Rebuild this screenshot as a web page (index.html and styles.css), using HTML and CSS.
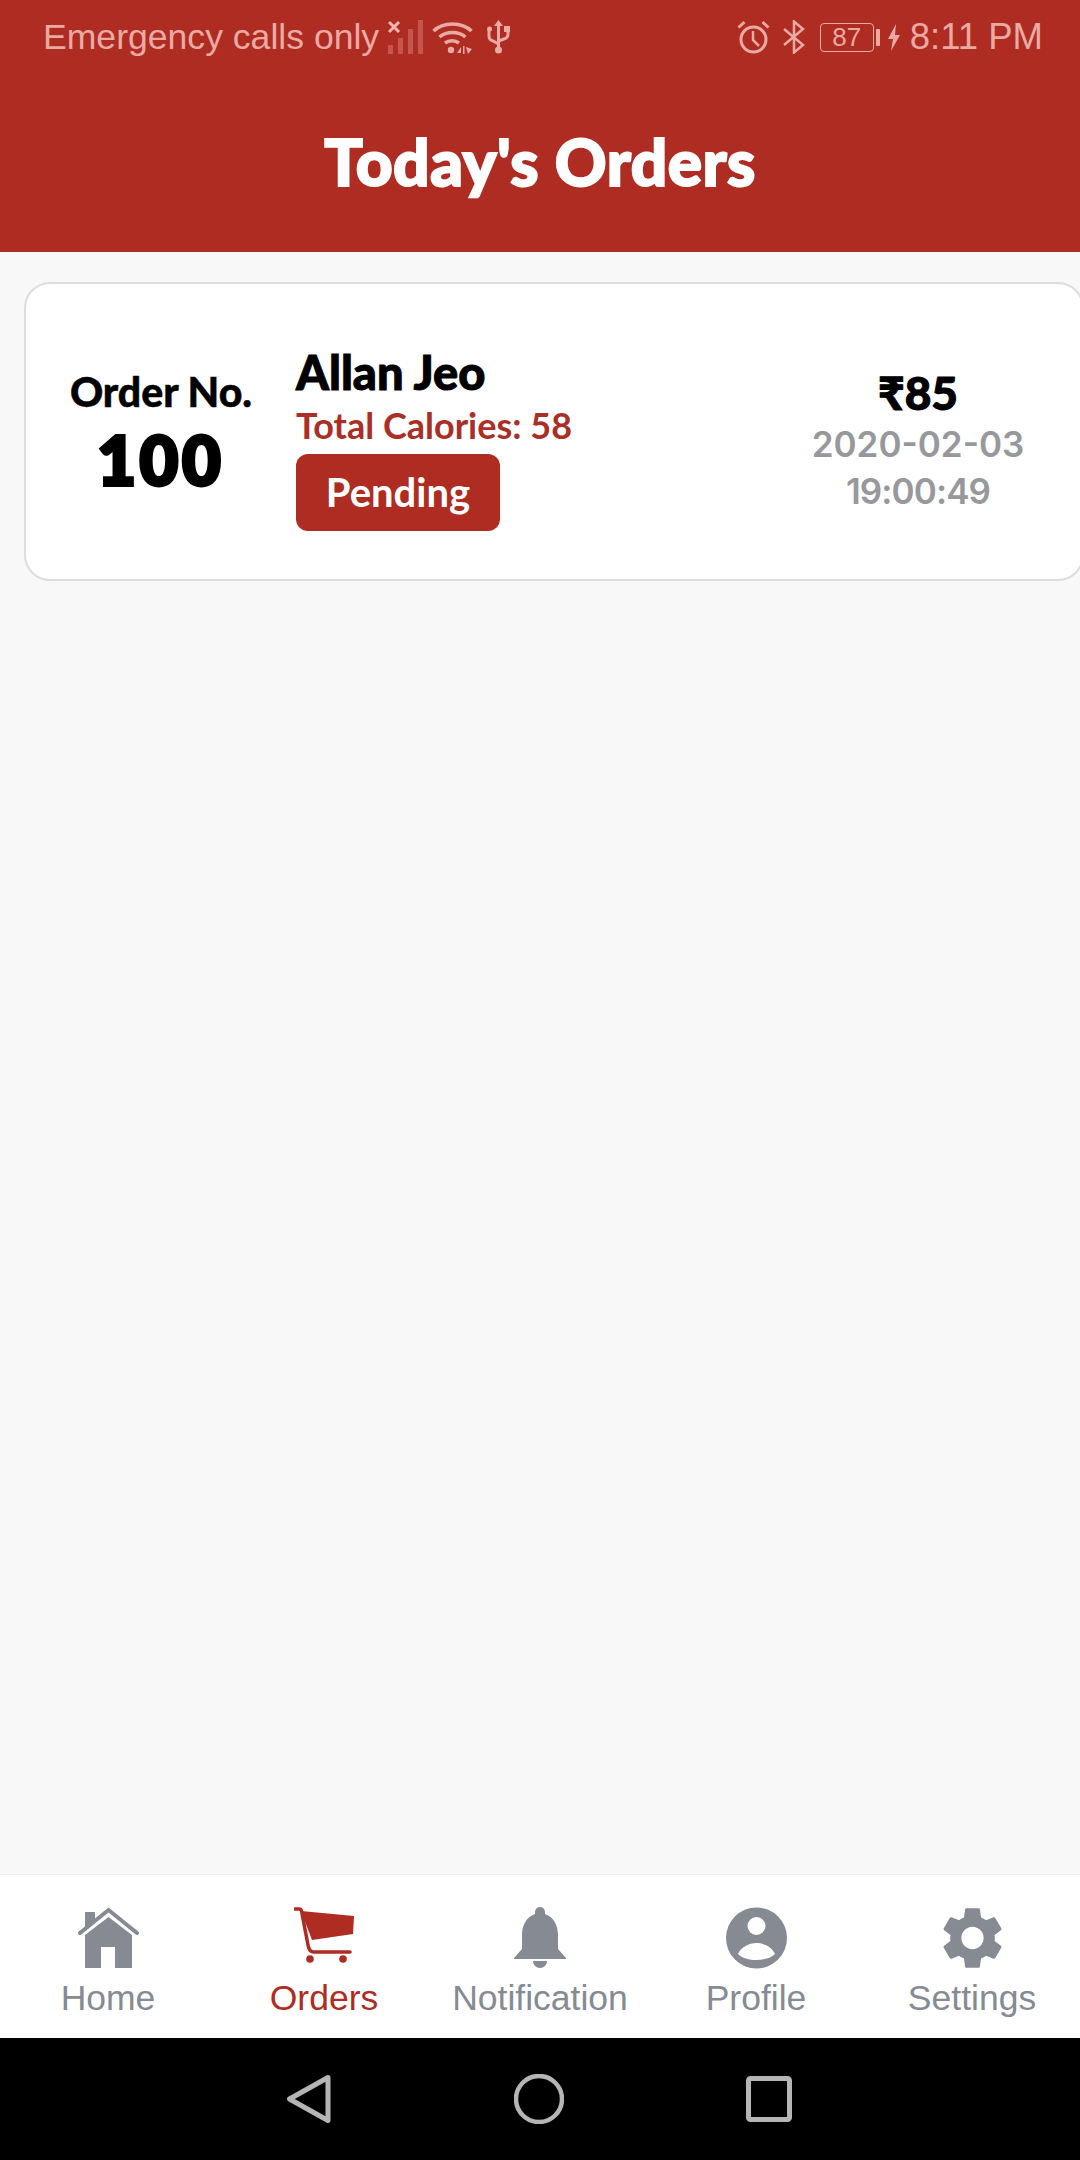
FILE: index.html
```html
<!DOCTYPE html>
<html lang="en">

<head>
    <meta charset="UTF-8">
    <meta name="viewport" content="width=device-width, initial-scale=1.0">
    <title>Today's Orders</title>
    <link rel="stylesheet" href="styles.css">
</head>

<body>
    <header class="top">
        <div class="status">
            <div class="status-group">
                <span class="status-text">Emergency calls only</span>
                <svg class="ic-signal" width="35" height="34" viewBox="0 0 35 34">
                    <path d="M1 2l10 10M11 2L1 12" stroke="#f0b5b0" stroke-width="3" fill="none" />
                    <g fill="#c4564d">
                        <rect x="0" y="25" width="5" height="9" />
                        <rect x="10" y="18" width="5" height="16" />
                        <rect x="20" y="9" width="5" height="25" />
                        <rect x="30" y="0" width="5" height="34" />
                    </g>
                </svg>
                <svg class="ic-wifi" width="41" height="34" viewBox="0 0 41 34" fill="none" stroke="#eba9a4" stroke-width="3.500">
                    <path d="M1.500 11C11 1.500 30 1.500 39.500 11" />
                    <path d="M7.500 17c7-6 19-6 26 0" />
                    <path d="M13 23c4-3 10-3 14 0" />
                    <circle cx="19" cy="30" r="3.200" fill="#eba9a4" stroke="none" />
                    <path d="M25 33l4-6v6zM31 26h1.500v8H31zM34 27l6 2-4 5z" fill="#eba9a4" stroke="none" />
                </svg>
                <svg class="ic-usb" width="23" height="34" viewBox="0 0 23 34" fill="none" stroke="#eba9a4" stroke-width="3">
                    <path d="M11.500 4V30M2 10v6q0 4 4 5l5.500 3M21 10v4q0 4-4 5l-5.500 2" />
                    <path d="M11.500 0l4.500 6H7z" fill="#eba9a4" stroke="none" />
                    <circle cx="11.500" cy="30" r="3.500" fill="#eba9a4" stroke="none" />
                    <rect x="17" y="6" width="6" height="6" fill="#eba9a4" stroke="none" />
                    <circle cx="2.500" cy="9" r="2.500" fill="#eba9a4" stroke="none" />
                </svg>
            </div>
            <div class="status-group">
                <svg class="ic-alarm" width="33" height="34" viewBox="0 0 33 34" fill="none" stroke="#eba9a4" stroke-width="3">
                    <circle cx="16.500" cy="19.500" r="12.500" />
                    <path d="M16 11v9l6 6" stroke-width="2.500" />
                    <path d="M1.500 7.500l6-5.500M31.500 7.500l-6-5.500" />
                </svg>
                <svg class="ic-bt" width="22" height="34" viewBox="0 0 22 34" fill="none" stroke="#eba9a4" stroke-width="2.500">
                    <path d="M1 9l19 16-9 7.500V1.500L20 9 1 25" />
                </svg>
                <div class="battery">
                    <span class="battery-box">87</span>
                    <span class="battery-nub"></span>
                </div>
                <svg class="ic-bolt" width="12" height="27" viewBox="0 0 12 27">
                    <path d="M8 0L0 15h5L3 27l9-16H7z" fill="#eba9a4" />
                </svg>
                <span class="status-text time">8:11 PM</span>
            </div>
        </div>
        <h1 class="title">Today's Orders</h1>
    </header>

    <main class="content">
        <div class="order-card">
            <div class="order-no">
                <div class="order-label">Order No.</div>
                <div class="order-num">100</div>
            </div>
            <div class="order-info">
                <div class="customer">Allan Jeo</div>
                <div class="calories">Total Calories: 58</div>
                <div class="pending">Pending</div>
            </div>
            <div class="order-meta">
                <div class="price">₹85</div>
                <div class="stamp">2020-02-03</div>
                <div class="stamp stamp-time">19:00:49</div>
            </div>
        </div>
    </main>

    <nav class="tabs">
        <div class="tab">
            <svg width="61" height="62" viewBox="0 0 61 62">
                <path d="M2 26L30.500 3 59 26" fill="none" stroke="#858a93" stroke-width="4" stroke-linecap="round" />
                <path d="M7 5h10v9L7 22zM7 28L30.500 10 54 28v33H37V40H23v21H7z" fill="#858a93" />
            </svg>
            <span>Home</span>
        </div>
        <div class="tab active">
            <svg width="60" height="62" viewBox="0 0 60 62">
                <path d="M7 4l53 5-1 18-41 6z" fill="#ae2c22" />
                <path d="M1 2h4q2 0 2.500 2L14 38q1 7 6 7h36" fill="none" stroke="#ae2c22" stroke-width="3.500" stroke-linecap="round" />
                <circle cx="16" cy="52" r="3.800" fill="#ae2c22" />
                <circle cx="49" cy="52" r="3.800" fill="#ae2c22" />
            </svg>
            <span>Orders</span>
        </div>
        <div class="tab">
            <svg width="52" height="62" viewBox="0 0 52 62">
                <path d="M26 0a5 5 0 0 1 5 5v2c9 3 13 12 13 21v14l8 9v1H0v-1l8-9V28C8 19 12 10 21 7V5a5 5 0 0 1 5-5z" fill="#858a93" />
                <path d="M19 54h14a7 7 0 0 1-14 0z" fill="#858a93" />
            </svg>
            <span>Notification</span>
        </div>
        <div class="tab">
            <svg width="61" height="62" viewBox="0 0 61 62">
                <circle cx="30.500" cy="31" r="30.500" fill="#858a93" />
                <circle cx="30.500" cy="19" r="9" fill="#fff" />
                <path d="M12 47c3-7 11-11 18.500-11S46 40 49 47c-4 4-11 6-18.500 6S16 51 12 47z" fill="#fff" />
            </svg>
            <span>Profile</span>
        </div>
        <div class="tab">
            <svg width="61" height="62" viewBox="2.500 2 19 20">
                <path fill="#858a93" d="M19.140 12.940c.04-.3.06-.61.06-.94 0-.32-.02-.64-.07-.94l2.030-1.580c.18-.14.23-.41.12-.61l-1.920-3.320c-.12-.22-.37-.29-.59-.22l-2.390.96c-.5-.38-1.030-.7-1.620-.94l-.36-2.540c-.04-.24-.24-.41-.48-.41h-3.840c-.24 0-.43.17-.47.41l-.36 2.540c-.59.24-1.130.57-1.620.94l-2.390-.96c-.22-.08-.47 0-.59.22L2.740 8.870c-.12.21-.08.47.12.61l2.030 1.580c-.05.3-.09.63-.09.94s.02.64.07.94l-2.030 1.580c-.18.14-.23.41-.12.61l1.920 3.320c.12.22.37.29.59.22l2.390-.96c.5.38 1.030.7 1.620.94l.36 2.540c.05.24.24.41.48.41h3.840c.24 0 .44-.17.47-.41l.36-2.540c.59-.24 1.130-.56 1.620-.94l2.390.96c.22.08.47 0 .59-.22l1.920-3.320c.12-.22.07-.47-.12-.61l-2.010-1.580zM12 15.600c-1.980 0-3.600-1.620-3.600-3.600s1.620-3.600 3.600-3.600 3.600 1.620 3.600 3.600-1.620 3.600-3.600 3.600z" />
            </svg>
            <span>Settings</span>
        </div>
    </nav>

    <div class="softkeys">
        <svg class="key-back" width="46" height="50" viewBox="0 0 46 50">
            <path d="M42 3.500L3.500 25 42 46.500z" fill="none" stroke="#b5b5b5" stroke-width="5" stroke-linejoin="round" />
        </svg>
        <svg width="50" height="50" viewBox="0 0 50 50">
            <circle cx="25" cy="25" r="23" fill="none" stroke="#b5b5b5" stroke-width="4.500" />
        </svg>
        <svg width="46" height="46" viewBox="0 0 46 46">
            <rect x="2.500" y="2.500" width="41" height="41" rx="2" fill="none" stroke="#b5b5b5" stroke-width="5" />
        </svg>
    </div>
</body>

</html>
```

FILE: styles.css
```css
html,
body {
    height: 100%;
}

body {
    font-family: "Liberation Sans", Arial, sans-serif;
    margin: 0;
    padding: 0;
    background-color: #f8f8f8;
    color: #000;
    display: flex;
    flex-direction: column;
    overflow: hidden;
}

.top {
    background-color: #ae2c22;
    height: 252px;
    flex-shrink: 0;
}

.status {
    display: flex;
    justify-content: space-between;
    height: 122px;
    padding: 18px 37px 0 43px;
    box-sizing: border-box;
}

.status-group {
    display: flex;
    align-items: center;
    height: 38px;
}

.status-text {
    font-size: 35.600px;
    line-height: 38px;
    color: #eba9a4;
}

.ic-signal {
    margin-left: 9px;
}

.ic-wifi {
    margin-left: 9px;
}

.ic-usb {
    margin-left: 14px;
}

.ic-bt {
    margin-left: 13px;
}

.battery {
    display: flex;
    align-items: center;
    margin-left: 15px;
}

.battery-box {
    width: 54px;
    height: 29px;
    box-sizing: border-box;
    border: 1.500px solid #eba9a4;
    border-radius: 4px;
    color: #eba9a4;
    font-size: 26px;
    line-height: 26px;
    text-align: center;
}

.battery-nub {
    width: 4px;
    height: 17px;
    margin-left: 2px;
    background-color: #eba9a4;
    border-radius: 1px;
}

.ic-bolt {
    margin-left: 8px;
}

.status-text.time {
    margin-left: 10px;
    font-size: 36.500px;
}

.title {
    margin: 0;
    text-align: center;
    color: #fff;
    font-family: Lato, sans-serif;
    font-size: 64px;
    font-weight: 900;
    letter-spacing: 0.500px;
    line-height: 80px;
    -webkit-text-stroke: 2px #fff;
}

.content {
    flex-grow: 1;
    padding: 30px 0 0 24px;
}

.order-card {
    display: flex;
    align-items: center;
    width: 1060px;
    height: 299px;
    box-sizing: border-box;
    background-color: #fff;
    border: 2px solid #ddd;
    border-radius: 26px;
}

.order-no {
    flex: 0 0 270px;
    padding-bottom: 4px;
    text-align: center;
}

.order-label {
    font-family: Lato, sans-serif;
    font-size: 41px;
    font-weight: 900;
    line-height: 50px;
    -webkit-text-stroke: 0.500px #000;
}

.order-num {
    margin-top: 10px;
    font-family: Lato, sans-serif;
    font-size: 66px;
    font-weight: 900;
    letter-spacing: 4px;
    line-height: 66px;
    -webkit-text-stroke: 4px #000;
}

.order-info {
    flex: 1;
    padding-top: 13px;
}

.customer {
    margin-top: -2px;
    margin-bottom: 2px;
    font-family: Lato, sans-serif;
    font-size: 47px;
    font-weight: 900;
    line-height: 56px;
    -webkit-text-stroke: 1px #000;
}

.calories {
    color: #a92f27;
    font-family: Lato, sans-serif;
    font-size: 36px;
    font-weight: 700;
    line-height: 46px;
}

.pending {
    width: 204px;
    height: 77px;
    margin-top: 6px;
    background-color: #ae2c22;
    border-radius: 12px;
    color: #fff;
    font-family: Lato, sans-serif;
    font-size: 40px;
    font-weight: 700;
    line-height: 77px;
    text-align: center;
}

.order-meta {
    flex: 0 0 328px;
    padding-top: 16px;
    text-align: center;
}

.price {
    font-family: Lato, "Noto Sans", sans-serif;
    font-size: 46px;
    font-weight: 900;
    line-height: 56px;
    -webkit-text-stroke: 1px #000;
}

.stamp {
    color: #97989c;
    font-family: Inter, sans-serif;
    font-size: 35px;
    font-weight: 600;
    line-height: 47px;
}

.stamp-time {
    letter-spacing: -0.900px;
}

.tabs {
    display: grid;
    grid-template-columns: repeat(5, 1fr);
    height: 164px;
    flex-shrink: 0;
    box-sizing: border-box;
    padding-top: 32px;
    background-color: #fff;
    border-top: 1px solid #eee;
}

.tab {
    display: flex;
    flex-direction: column;
    align-items: center;
    color: #858a93;
    font-size: 35.500px;
    line-height: 40px;
}

.tab span {
    margin-top: 9px;
}

.tab.active {
    color: #ae2c22;
}

.softkeys {
    display: flex;
    justify-content: center;
    align-items: center;
    gap: 182px;
    height: 122px;
    flex-shrink: 0;
    background-color: #000;
}

.key-back {
    margin-left: -2px;
}
```
